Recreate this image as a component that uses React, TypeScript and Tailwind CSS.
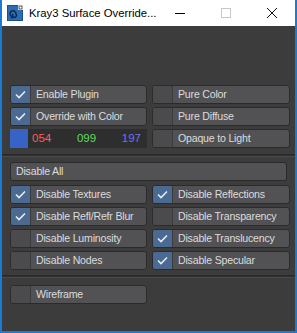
import React from "react";

const Check = () => (
  <svg width="11" height="9" viewBox="0 0 11 9" fill="none">
    <path d="M1 4.5 L4 7.5 L10 1.5" stroke="#e6ecf4" strokeWidth="1.6" />
  </svg>
);

function Toggle({ label, checked }: { label: string; checked?: boolean }) {
  return (
    <div className="flex h-[19px] rounded-[3px] border border-[#2b2b2b] bg-[#525254] overflow-hidden">
      <div
        className={
          "w-[20px] shrink-0 flex items-center justify-center border-r border-[#3a3a3a] " +
          (checked ? "bg-[#4a6a92]" : "bg-[#4b4b4d]")
        }
      >
        {checked && <Check />}
      </div>
      <div className="flex-1 pl-[5px] text-[10.6px] tracking-[-0.2px] leading-[17px] text-[#dcdcdc] whitespace-nowrap">
        {label}
      </div>
    </div>
  );
}

function Divider() {
  return (
    <div className="flex flex-col">
      <div className="h-px bg-[#2a2a2a]" />
      <div className="h-px bg-[#2f2f2f]" />
      <div className="h-px bg-[#4a4a4a]" />
    </div>
  );
}

export default function App() {
  return (
    <div
      className="w-[297px] h-[333px] flex flex-col bg-[#3c3c3d] border-x-2 border-b-2 border-[#1a7ad4] overflow-hidden"
      style={{ fontFamily: "'Liberation Sans', 'DejaVu Sans', sans-serif" }}
    >
      {/* Title bar */}
      <div className="h-[26px] bg-white flex items-center shrink-0">
        <div className="ml-[5px] w-[16px] h-[16px] shrink-0">
          <svg width="16" height="16" viewBox="0 0 16 16">
            <rect x="0" y="0" width="16" height="16" fill="#1e4e86" />
            <rect x="1" y="1" width="14" height="14" fill="#2a6db3" />
            <rect x="11" y="0" width="5" height="5" fill="#fff" />
            <rect x="12" y="1" width="3" height="3" fill="#fff" stroke="#333" strokeWidth="0.8" />
            <path d="M4 11 a3 3 0 1 1 5 -2 a2 2 0 1 1 -3 0" stroke="#0e2a4c" strokeWidth="1.5" fill="none" />
            <circle cx="5" cy="12" r="1.5" fill="#0e2a4c" />
          </svg>
        </div>
        <div className="ml-[6px] text-[11.3px] text-black whitespace-nowrap">Kray3 Surface Override...</div>
        <div className="flex-1" />
        <div className="w-[46px] shrink-0 flex justify-center">
          <div className="w-[10px] h-px bg-black" />
        </div>
        <div className="w-[46px] shrink-0 flex justify-center">
          <div className="w-[10px] h-[10px] border border-[#c8c8c8]" />
        </div>
        <div className="w-[46px] shrink-0 flex justify-center">
          <svg width="10" height="10" viewBox="0 0 10 10">
            <path d="M0 0 L10 10 M10 0 L0 10" stroke="#111" strokeWidth="1" />
          </svg>
        </div>
      </div>

      {/* Content */}
      <div className="flex flex-col pt-[59px]">
        <div className="grid grid-cols-[137px_138px] gap-x-[5px] gap-y-[3px] px-[8px]">
          <Toggle label="Enable Plugin" checked />
          <Toggle label="Pure Color" />
          <Toggle label="Override with Color" checked />
          <Toggle label="Pure Diffuse" />
          <div className="flex h-[19px] bg-[#2e2e2f] text-[11.5px] leading-[19px]">
            <div className="w-[18px] bg-[#3663c5]" />
            <div className="flex-1 flex justify-between pl-[4px] pr-[6px]">
              <span className="text-[#ff5c5c]">054</span>
              <span className="text-[#5fdc5f]">099</span>
              <span className="text-[#6e6eff]">197</span>
            </div>
          </div>
          <Toggle label="Opaque to Light" />
        </div>

        <div className="mt-[6px]">
          <Divider />
        </div>

        <div className="px-[8px] mt-[5px]">
          <div className="h-[19px] rounded-[3px] border border-[#2b2b2b] bg-[#525254] pl-[5px] text-[10.6px] tracking-[-0.2px] leading-[17px] text-[#dcdcdc]">
            Disable All
          </div>
        </div>

        <div className="grid grid-cols-[137px_138px] gap-x-[5px] gap-y-[3px] px-[8px] mt-[4px]">
          <Toggle label="Disable Textures" checked />
          <Toggle label="Disable Reflections" checked />
          <Toggle label="Disable Refl/Refr Blur" checked />
          <Toggle label="Disable Transparency" />
          <Toggle label="Disable Luminosity" />
          <Toggle label="Disable Translucency" checked />
          <Toggle label="Disable Nodes" />
          <Toggle label="Disable Specular" checked />
        </div>

        <div className="mt-[5px]">
          <Divider />
        </div>

        <div className="grid grid-cols-[137px_138px] gap-x-[5px] px-[8px] mt-[7px]">
          <Toggle label="Wireframe" />
        </div>
      </div>
    </div>
  );
}
